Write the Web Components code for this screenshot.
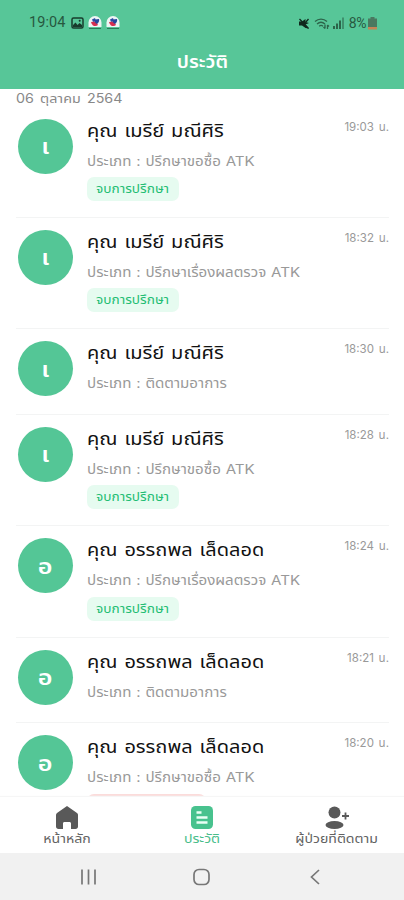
<!DOCTYPE html>
<html lang="th">
<head>
<meta charset="utf-8">
<meta name="viewport" content="width=device-width, initial-scale=1">
<title>ประวัติ</title>
<style>
html, body {
    margin: 0;
    height: 100%;
    overflow: hidden;
}
body {
    background: #fff;
    font-family: "Inter", "Noto Sans Thai", "Noto Sans", sans-serif;
}
</style>
</head>
<body>
<history-app></history-app>

<script>
const define = (name, html, setup) => {
    const template = document.createElement('template');
    template.innerHTML = html;

    customElements.define(name, class extends HTMLElement {
        constructor() {
            super();
            this.attachShadow({ mode: 'open' });
            this.shadowRoot.appendChild(template.content.cloneNode(true));
        }

        connectedCallback() {
            if (setup) setup(this, this.shadowRoot);
        }
    });
};

// phone status bar
define('status-bar', `
<style>
:host {
    display: flex;
    align-items: center;
    justify-content: space-between;
    height: 46px;
    padding: 0 27px 0 29px;
    color: #27583f;
    font: 14.5px/46px Roboto, sans-serif;
}
div { display: flex; align-items: center; }
svg { display: block; }
.left { gap: 4px; }
.time { letter-spacing: 0.1px; margin-right: 1px; }
.right { gap: 3px; font-size: 14px; }
.charge { margin: 0 -1px 0 2px; letter-spacing: -0.4px; }
</style>
<div class="left">
    <span class="time">19:04</span>
    <svg width="13" height="12" viewBox="0 0 13 12"><rect x="1" y="1" width="11" height="10" rx="1.5" fill="none" stroke="#183c2c" stroke-width="1.5"/><path d="M2 10V8l2.5-2.5L6.5 8l2-2L11 8v2z" fill="#183c2c"/><circle cx="8.7" cy="3.8" r="1" fill="#183c2c"/></svg>
    <svg width="14" height="14" viewBox="0 0 14 14"><path d="M.5 11V6.5a6.5 6.5 0 0 1 13 0V11z" fill="#eef5f5"/><path d="M4 3.500l3-1.500 1 3-3 1z" fill="#2b4ca5"/><path d="M3 6l5-.5 2 3.500c-2 2-6 1.500-7-3z" fill="#d52e50"/><path d="M7 3.500l4-.5c.5 2-.5 4-2 5L6.500 6z" fill="#28479d"/><path d="M1 12.500h12" stroke="#2d795a"/></svg>
    <svg width="14" height="14" viewBox="0 0 14 14"><path d="M.5 11V6.5a6.5 6.5 0 0 1 13 0V11z" fill="#eef5f5"/><path d="M4 3.500l3-1.500 1 3-3 1z" fill="#2b4ca5"/><path d="M3 6l5-.5 2 3.500c-2 2-6 1.500-7-3z" fill="#d52e50"/><path d="M7 3.500l4-.5c.5 2-.5 4-2 5L6.500 6z" fill="#28479d"/><path d="M1 12.500h12" stroke="#2d795a"/></svg>
</div>
<div class="right">
    <svg width="13" height="13" viewBox="0 0 13 13"><path d="M1 4.500h3L7.500 2v3l3.500 1-3.500 1.500L11 11.500 7.500 11 4 8.500H1z" fill="#10281d"/><path d="M1.500 2l9 9.500M7.500 5.500l3-3.500" stroke="#10281d" stroke-width="1.300"/></svg>
    <svg width="16" height="13" viewBox="0 0 16 13" fill="none" stroke="#2c654a" stroke-width="1.300"><path d="M1 4.500c3.500-3.300 8.500-3.300 12 0M3 7c2.500-2.200 5.500-2.200 8 0M5.200 9.200c1.200-1 2.600-1 3.800 0"/><path d="M11 7.500v4m-1.500-1.500l1.500 1.500M13.500 12V8m0 0l1.500 1.500"/></svg>
    <svg width="11" height="12" viewBox="0 0 11 12" fill="#2c654a"><path d="M0 9h2v3H0zM3 6.500h2V12H3zM6 3.500h2V12H6z"/><path d="M9 .5h2V12H9z" opacity=".55"/></svg>
    <span class="charge">8%</span>
    <svg width="9" height="13" viewBox="0 0 9 13"><path d="M2.500 0h4v1.500H9V10H0V1.500h2.500z" fill="#4a7960"/><path d="M0 10h9v2.500H0z" fill="#c58556"/></svg>
</div>
`);

// stretches its text sideways, for a wide and round letter
define('wide-text', `
<style>
:host {
    display: inline-block;
    transform: scaleX(var(--stretch, 1.1));
    transform-origin: var(--stretch-from, left);
    white-space: nowrap;
}
</style>
<slot></slot>
`);

// round initial on the left of a row
define('user-avatar', `
<style>
:host {
    display: flex;
    align-items: center;
    justify-content: center;
    box-sizing: border-box;
    width: 55px;
    height: 55px;
    padding-top: 3px;
    border-radius: 50%;
    background: #54c696;
    color: #fff;
    font-size: 21px;
    font-weight: 600;
    --stretch: 1.2;
    --stretch-from: center;
}
</style>
<wide-text><slot></slot></wide-text>
`);

define('status-badge', `
<style>
:host {
    display: block;
    box-sizing: border-box;
    width: 92px;
    height: 24px;
    border-radius: 7px;
    background: #e6fbf0;
    color: #1fbd73;
    font-size: 12.5px;
    line-height: 24px;
    text-align: center;
    --stretch: 1.09;
    --stretch-from: center;
}
:host([tone="danger"]) {
    width: 119px;
    background: #fbdcdb;
}
</style>
<wide-text><slot></slot></wide-text>
`);

// one consultation: avatar, name, type, optional badge and time
define('history-item', `
<style>
:host {
    display: flex;
    box-sizing: border-box;
    height: 111.4px;
    margin: 0 15px 0 16px;
    padding: 12px 0 0 2px;
    border-bottom: 1.5px solid #f3f4f4;
}
:host([short]) { height: 85.7px; }
user-avatar { flex: none; margin-right: 14px; }
.info { flex: 1; white-space: nowrap; }
.name {
    height: 26px;
    font-size: 18px;
    word-spacing: 1.2px;
    line-height: 24px;
    color: #111;
    --stretch: 1.11;
}
.type {
    height: 20px;
    margin: 6px 0 6.500px;
    font-size: 13.5px;
    word-spacing: 0.5px;
    line-height: 20px;
    color: #999;
    --stretch: 1.12;
}
.time {
    font-size: 11.5px;
    word-spacing: 1.5px;
    line-height: 17px;
    color: #999;
}
</style>
<user-avatar></user-avatar>
<div class="info">
    <div class="name"><wide-text></wide-text></div>
    <div class="type"><wide-text></wide-text></div>
    <slot></slot>
</div>
<div class="time"></div>
`, (host, root) => {
    const name = host.getAttribute('name');
    root.querySelector('user-avatar').textContent = name.split(' ')[1][0];
    root.querySelector('.name wide-text').textContent = name;
    root.querySelector('.type wide-text').textContent = 'ประเภท : ' + host.getAttribute('type');
    root.querySelector('.time').textContent = host.getAttribute('time') + ' น.';
});

define('tab-item', `
<style>
:host {
    display: flex;
    flex: 1;
    flex-direction: column;
    align-items: center;
    padding-top: 8px;
    color: #626262;
    font-size: 12.5px;
    line-height: 16px;
    --stretch: 1.13;
    --stretch-from: center;
}
:host([active]) { color: #48bd8a; }
wide-text { margin-top: 1px; }
</style>
<slot name="icon"></slot>
<wide-text><slot></slot></wide-text>
`);

define('tab-bar', `
<style>
:host {
    display: flex;
    flex: none;
    box-sizing: border-box;
    height: 56px;
    background: #fff;
    box-shadow: 0 -1px 1px #f6f6f6;
    position: relative;
}
svg { display: block; }
</style>
<tab-item>
    <svg slot="icon" width="26" height="25" viewBox="0 0 26 25"><path d="M13 1 23 8c.8.600 1 1.200 1 2v11.500c0 1.500-1 2.500-2.500 2.500H17v-5.500c0-1-.8-1.500-1.500-1.500h-5c-.8 0-1.500.5-1.500 1.500V24H4.500C3 24 2 23 2 21.500V10c0-.8.300-1.500 1-2z" fill="#595959"/></svg>
    หน้าหลัก
</tab-item>
<tab-item active>
    <svg slot="icon" width="26" height="25" viewBox="0 0 26 25"><rect x="2" y="1" width="22" height="23" rx="4.500" fill="#48c28e"/><path d="M7.500 7.500h5M7.500 12.500h11M7.500 17.500h11" stroke="#e9fff5" stroke-width="2.400"/></svg>
    ประวัติ
</tab-item>
<tab-item>
    <svg slot="icon" width="26" height="25" viewBox="0 0 26 25"><circle cx="10.500" cy="7.500" r="6" fill="#595959"/><ellipse cx="10.500" cy="20" rx="9" ry="4" fill="#595959"/><path d="M21.500 7.500v7M18 11h7" stroke="#595959" stroke-width="1.800"/></svg>
    ผู้ป่วยที่ติดตาม
</tab-item>
`);

// android navigation keys
define('system-keys', `
<style>
:host {
    display: flex;
    flex: none;
    align-items: center;
    justify-content: space-between;
    box-sizing: border-box;
    height: 47px;
    padding: 0 79px;
    background: #f1f1f1;
}
svg { display: block; fill: none; stroke: #777; stroke-width: 1.7; }
</style>
<svg width="20" height="18" viewBox="0 0 20 18"><path d="M3 1.500v15M9.500 1.500v15M16 1.500v15"/></svg>
<svg width="20" height="18" viewBox="0 0 20 18"><rect x="2" y="1.500" width="15" height="15" rx="5"/></svg>
<svg width="20" height="18" viewBox="0 0 20 18"><path d="M14 2 6.500 9l7.500 7"/></svg>
`);

define('history-app', `
<style>
:host {
    display: flex;
    flex-direction: column;
    height: 900px;
    overflow: hidden;
}
header {
    flex: none;
    height: 88.5px;
    background: #57c698;
}
h1 {
    margin: 0;
    height: 32px;
    color: #fff;
    font-size: 18.5px;
    font-weight: 600;
    line-height: 31px;
    text-align: center;
    --stretch: 1.05;
    --stretch-from: center;
}
main {
    flex: 1;
    min-height: 0;
    overflow: hidden;
}
.date {
    height: 18px;
    padding-left: 16px;
    color: #888;
    font-size: 13px;
    word-spacing: 2px;
    line-height: 18px;
    --stretch: 1.1;
}
</style>
<header>
    <status-bar></status-bar>
    <h1><wide-text>ประวัติ</wide-text></h1>
</header>
<main>
    <div class="date"><wide-text>06 ตุลาคม 2564</wide-text></div>
    <history-item name="คุณ เมรีย์ มณีศิริ" type="ปรึกษาขอซื้อ ATK" time="19:03"><status-badge>จบการปรึกษา</status-badge></history-item>
    <history-item name="คุณ เมรีย์ มณีศิริ" type="ปรึกษาเรื่องผลตรวจ ATK" time="18:32"><status-badge>จบการปรึกษา</status-badge></history-item>
    <history-item short name="คุณ เมรีย์ มณีศิริ" type="ติดตามอาการ" time="18:30"></history-item>
    <history-item name="คุณ เมรีย์ มณีศิริ" type="ปรึกษาขอซื้อ ATK" time="18:28"><status-badge>จบการปรึกษา</status-badge></history-item>
    <history-item name="คุณ อรรถพล เล็ดลอด" type="ปรึกษาเรื่องผลตรวจ ATK" time="18:24"><status-badge>จบการปรึกษา</status-badge></history-item>
    <history-item short name="คุณ อรรถพล เล็ดลอด" type="ติดตามอาการ" time="18:21"></history-item>
    <history-item name="คุณ อรรถพล เล็ดลอด" type="ปรึกษาขอซื้อ ATK" time="18:20"><status-badge tone="danger"></status-badge></history-item>
</main>
<tab-bar></tab-bar>
<system-keys></system-keys>
`);
</script>
</body>
</html>
